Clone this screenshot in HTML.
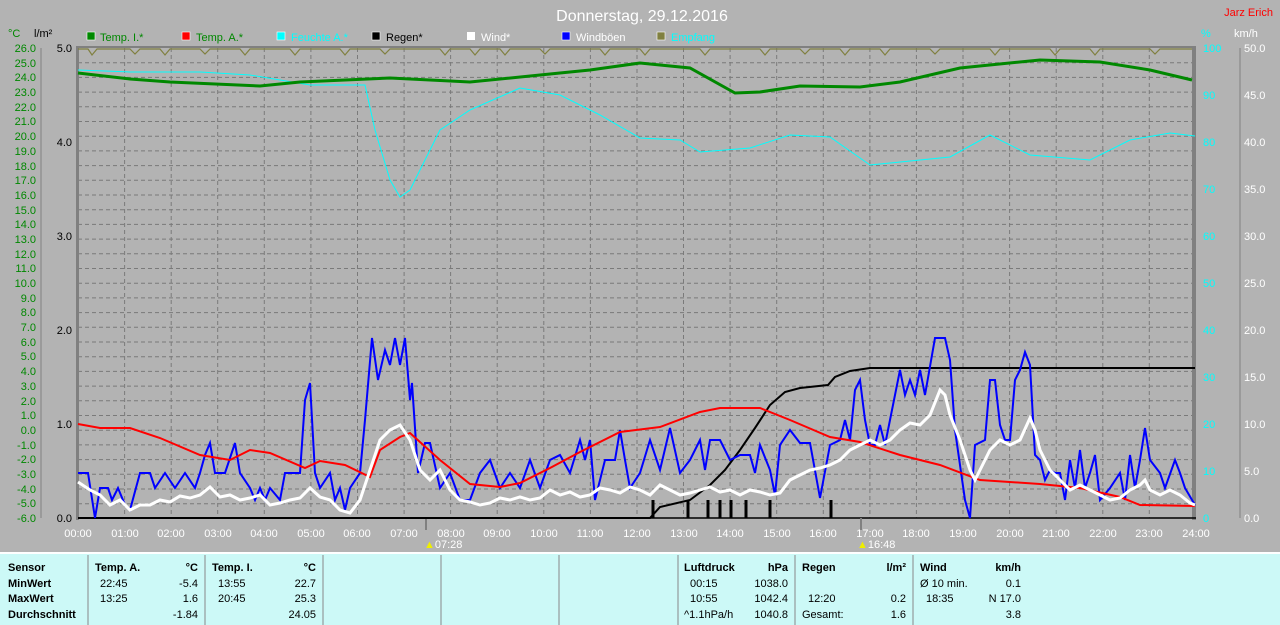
<!DOCTYPE html>
<html><head><meta charset="utf-8"><style>
html,body{margin:0;padding:0;background:#b3b3b3;width:1280px;height:625px;overflow:hidden;font-family:"Liberation Sans",sans-serif}
svg{display:block}
</style></head><body>
<svg width="1280" height="625" xmlns="http://www.w3.org/2000/svg" font-family="Liberation Sans, sans-serif">
<rect width="1280" height="625" fill="#b3b3b3"/>
<text x="642" y="21" fill="#fff" font-size="16" text-anchor="middle">Donnerstag, 29.12.2016</text>
<text x="1273" y="16" fill="#f00" font-size="11" text-anchor="end">Jarz Erich</text>
<!-- legend -->
<g font-size="11">
<text x="8" y="37" fill="#080">°C</text><text x="34" y="37" fill="#000">l/m²</text>
<rect x="87" y="32" width="8" height="8" fill="#080" stroke="#fff" stroke-width=".6"/><text x="100" y="41" fill="#080">Temp. I.*</text>
<rect x="182" y="32" width="8" height="8" fill="#f00" stroke="#fff" stroke-width=".6"/><text x="196" y="41" fill="#080">Temp. A.*</text>
<rect x="277" y="32" width="8" height="8" fill="#0ff" stroke="#fff" stroke-width=".6"/><text x="291" y="41" fill="#0ff">Feuchte A.*</text>
<rect x="372" y="32" width="8" height="8" fill="#000" stroke="#fff" stroke-width=".6"/><text x="386" y="41" fill="#000">Regen*</text>
<rect x="467" y="32" width="8" height="8" fill="#fff"/><text x="481" y="41" fill="#fff">Wind*</text>
<rect x="562" y="32" width="8" height="8" fill="#00f" stroke="#fff" stroke-width=".6"/><text x="576" y="41" fill="#fff">Windböen</text>
<rect x="657" y="32" width="8" height="8" fill="#808040" stroke="#fff" stroke-width=".6"/><text x="671" y="41" fill="#0ff">Empfang</text>
<text x="1201" y="37" fill="#0ff">%</text><text x="1234" y="37" fill="#fff">km/h</text>
</g>
<!-- grid -->
<g stroke="#7a7a7a" stroke-dasharray="4,3" stroke-width="1">
<path d="M78 62.7H1192M78 77.4H1192M78 92.1H1192M78 106.8H1192M78 121.5H1192M78 136.2H1192M78 150.9H1192M78 165.6H1192M78 180.3H1192M78 195H1192M78 209.7H1192M78 224.4H1192M78 239.1H1192M78 253.8H1192M78 268.5H1192M78 283.2H1192M78 297.9H1192M78 312.6H1192M78 327.3H1192M78 342H1192M78 356.7H1192M78 371.4H1192M78 386.1H1192M78 400.8H1192M78 415.5H1192M78 430.2H1192M78 444.9H1192M78 459.6H1192M78 474.3H1192M78 489H1192M78 503.7H1192"/>
<path d="M124.6 48V518M171.2 48V518M217.7 48V518M264.3 48V518M310.9 48V518M357.5 48V518M404.1 48V518M450.6 48V518M497.2 48V518M543.8 48V518M590.4 48V518M637 48V518M683.5 48V518M730.1 48V518M776.7 48V518M823.3 48V518M869.9 48V518M916.4 48V518M963 48V518M1009.6 48V518M1056.2 48V518M1102.8 48V518M1149.3 48V518"/>
</g>
<rect x="76" y="46" width="3" height="474" fill="#808080"/>
<rect x="1192" y="46" width="4" height="474" fill="#808080"/>
<line x1="78" y1="47" x2="1196" y2="47" stroke="#808080" stroke-width="2"/>
<line x1="78" y1="518" x2="1196" y2="518" stroke="#000" stroke-width="1.5"/>
<!-- axes -->
<line x1="41" y1="48" x2="41" y2="518" stroke="#808080"/>
<line x1="1240" y1="48" x2="1240" y2="518" stroke="#808080"/>
<g font-size="11" fill="#080" text-anchor="end">
<text x="36" y="52">26.0</text><text x="36" y="67">25.0</text><text x="36" y="81">24.0</text><text x="36" y="96">23.0</text><text x="36" y="111">22.0</text><text x="36" y="125">21.0</text><text x="36" y="140">20.0</text><text x="36" y="155">19.0</text><text x="36" y="170">18.0</text><text x="36" y="184">17.0</text><text x="36" y="199">16.0</text><text x="36" y="214">15.0</text><text x="36" y="228">14.0</text><text x="36" y="243">13.0</text><text x="36" y="258">12.0</text><text x="36" y="272">11.0</text><text x="36" y="287">10.0</text><text x="36" y="302">9.0</text><text x="36" y="316">8.0</text><text x="36" y="331">7.0</text><text x="36" y="346">6.0</text><text x="36" y="360">5.0</text><text x="36" y="375">4.0</text><text x="36" y="390">3.0</text><text x="36" y="405">2.0</text><text x="36" y="419">1.0</text><text x="36" y="434">0.0</text><text x="36" y="449">-1.0</text><text x="36" y="463">-2.0</text><text x="36" y="478">-3.0</text><text x="36" y="493">-4.0</text><text x="36" y="507">-5.0</text><text x="36" y="522">-6.0</text>
</g>
<g font-size="11" fill="#000" text-anchor="end">
<text x="72" y="52">5.0</text><text x="72" y="146">4.0</text><text x="72" y="240">3.0</text><text x="72" y="334">2.0</text><text x="72" y="428">1.0</text><text x="72" y="522">0.0</text>
</g>
<g font-size="11" fill="#0ff">
<text x="1203" y="52">100</text><text x="1203" y="99">90</text><text x="1203" y="146">80</text><text x="1203" y="193">70</text><text x="1203" y="240">60</text><text x="1203" y="287">50</text><text x="1203" y="334">40</text><text x="1203" y="381">30</text><text x="1203" y="428">20</text><text x="1203" y="475">10</text><text x="1203" y="522">0</text>
</g>
<g font-size="11" fill="#fff">
<text x="1244" y="52">50.0</text><text x="1244" y="99">45.0</text><text x="1244" y="146">40.0</text><text x="1244" y="193">35.0</text><text x="1244" y="240">30.0</text><text x="1244" y="287">25.0</text><text x="1244" y="334">20.0</text><text x="1244" y="381">15.0</text><text x="1244" y="428">10.0</text><text x="1244" y="475">5.0</text><text x="1244" y="522">0.0</text>
</g>
<g font-size="11" fill="#fff" text-anchor="middle">
<text x="78" y="537">00:00</text><text x="125" y="537">01:00</text><text x="171" y="537">02:00</text><text x="218" y="537">03:00</text><text x="264" y="537">04:00</text><text x="311" y="537">05:00</text><text x="357" y="537">06:00</text><text x="404" y="537">07:00</text><text x="451" y="537">08:00</text><text x="497" y="537">09:00</text><text x="544" y="537">10:00</text><text x="590" y="537">11:00</text><text x="637" y="537">12:00</text><text x="684" y="537">13:00</text><text x="730" y="537">14:00</text><text x="777" y="537">15:00</text><text x="823" y="537">16:00</text><text x="870" y="537">17:00</text><text x="916" y="537">18:00</text><text x="963" y="537">19:00</text><text x="1010" y="537">20:00</text><text x="1056" y="537">21:00</text><text x="1103" y="537">22:00</text><text x="1149" y="537">23:00</text><text x="1196" y="537">24:00</text>
</g>
<line x1="426" y1="518" x2="426" y2="530" stroke="#808080" stroke-width="2"/>
<line x1="861" y1="518" x2="861" y2="530" stroke="#808080" stroke-width="2"/>
<text x="424" y="548" font-size="11" fill="#fff"><tspan fill="#ee0">▲</tspan>07:28</text>
<text x="857" y="548" font-size="11" fill="#fff"><tspan fill="#ee0">▲</tspan>16:48</text>
<!-- empfang -->
<polyline fill="none" stroke="#808040" stroke-width="1.2" points="78,49 88,49 92,55 97,49 130,49 135,54 140,49 160,49 165,55 170,49 200,49 205,54 210,49 240,49 245,55 250,49 290,49 295,55 300,49 340,49 345,55 350,49 380,49 385,54 390,49 440,49 445,55 450,49 470,49 475,55 480,49 500,49 505,55 510,49 540,49 545,54 550,49 600,49 605,55 610,49 640,49 645,55 650,49 700,49 705,55 710,49 760,49 765,55 770,49 800,49 805,54 810,49 840,49 845,55 850,49 880,49 885,55 890,49 930,49 935,54 940,49 990,49 995,55 1000,49 1050,49 1055,55 1060,49 1090,49 1095,55 1100,49 1150,49 1155,54 1160,49 1192,49"/>
<!-- humidity -->
<polyline fill="none" stroke="#0ff" stroke-width="1" points="78,70 130,72 200,72 250,75 310,85 365,85 375,130 390,180 400,197 410,190 440,130 470,110 520,88 560,95 600,115 640,138 680,140 700,152 750,148 790,135 830,137 870,165 920,160 950,157 990,135 1030,155 1090,160 1130,140 1170,133 1195,136"/>
<!-- temp I -->
<polyline fill="none" stroke="#080" stroke-width="3" points="78,73 130,79 170,82 260,86 300,82 390,78 470,82 540,75 590,70 640,63 690,68 735,93 760,92 800,86 860,87 900,82 960,68 1040,60 1100,62 1150,70 1192,80"/>
<!-- rain bars -->
<g stroke="#000" stroke-width="3"><path d="M653 518V500M688 518V500M708 518V500M720 518V500M731 518V500M746 518V500M770 518V500M831 518V500"/></g>
<!-- rain cumulative -->
<polyline fill="none" stroke="#000" stroke-width="2" points="78,518 650,518 660,507 690,500 710,485 725,470 740,450 755,428 770,405 785,392 800,388 828,385 835,377 850,371 870,368 1195,368"/>
<!-- blue gusts -->
<polyline fill="none" stroke="#00f" stroke-width="2" points="78,473 88,473 95,518 100,488 108,488 112,500 118,488 125,505 130,510 140,473 150,473 155,488 165,473 175,488 185,473 195,488 200,473 205,455 210,443 215,473 225,473 235,443 240,473 250,488 255,500 260,488 265,500 270,488 280,500 285,473 300,473 305,400 310,383 315,473 320,488 330,473 335,500 340,488 345,510 350,488 360,473 365,420 372,338 378,380 385,350 390,365 395,338 400,365 405,338 410,400 412,383 418,473 425,443 430,443 440,488 450,473 460,500 470,500 480,473 490,460 500,488 510,473 520,488 530,460 540,488 550,460 560,455 570,473 580,440 585,460 590,440 595,500 605,460 615,460 620,430 625,460 630,488 640,473 650,440 660,470 670,428 680,473 690,460 700,440 705,470 710,440 720,440 730,460 740,455 750,455 755,473 760,445 770,470 775,495 780,445 790,430 800,443 810,443 820,498 830,445 840,440 845,420 850,440 855,390 860,380 865,420 870,445 875,445 880,425 885,445 890,420 900,370 905,395 910,380 915,395 920,370 925,395 935,338 945,338 950,360 955,430 965,500 970,518 975,445 985,440 990,380 995,380 1000,425 1005,440 1010,440 1015,380 1020,370 1025,352 1030,365 1035,455 1040,460 1045,480 1050,470 1055,473 1060,473 1065,500 1070,460 1075,488 1080,450 1085,488 1090,473 1095,455 1100,500 1110,488 1120,473 1125,500 1130,455 1135,488 1140,460 1145,428 1150,460 1160,473 1165,488 1175,460 1180,473 1185,488 1195,505"/>
<!-- temp A -->
<polyline fill="none" stroke="#f00" stroke-width="2" points="78,424 100,428 130,428 160,438 200,455 230,460 250,450 270,453 305,468 320,461 345,465 370,477 380,450 400,437 410,433 440,460 470,484 500,487 520,483 550,468 580,452 620,432 660,427 700,412 720,408 760,408 790,420 830,437 860,442 900,455 940,465 980,480 1040,484 1080,488 1120,497 1140,505 1195,506"/>
<!-- wind -->
<polyline fill="none" stroke="#fff" stroke-width="3" points="78,482 90,490 100,495 110,505 120,500 130,510 140,505 150,505 160,500 170,502 180,496 190,498 200,495 210,487 220,497 230,495 240,500 250,498 260,495 270,505 280,503 290,500 300,498 310,488 320,497 330,500 340,510 350,513 360,500 370,470 380,440 390,430 400,425 410,440 420,470 430,480 440,470 450,490 460,500 470,502 480,505 490,503 500,498 510,500 520,497 530,500 540,498 550,490 560,495 570,492 580,497 590,495 600,488 610,490 620,493 630,487 640,490 650,495 660,485 670,490 680,495 690,493 700,490 710,487 720,492 730,490 740,495 750,490 760,492 770,495 780,493 790,480 800,475 810,470 820,468 830,465 840,460 850,450 860,445 870,440 880,445 890,440 900,430 910,423 920,425 930,415 940,390 945,395 950,415 960,440 970,470 975,480 980,470 990,450 1000,440 1010,445 1020,440 1030,418 1035,430 1040,450 1050,470 1060,480 1070,490 1080,485 1090,490 1100,495 1110,500 1120,498 1130,490 1140,485 1145,480 1150,490 1160,495 1170,490 1180,495 1190,503 1195,505"/>
<!-- table -->
<rect x="0" y="553" width="1280" height="72" fill="#ccf9f7"/>
<line x1="0" y1="553" x2="1280" y2="553" stroke="#fff" stroke-width="2"/>
<g stroke="#888" stroke-width="1"><path d="M88 555V625M205 555V625M323 555V625M441 555V625M559 555V625M678 555V625M795 555V625M913 555V625"/></g>
<g font-size="11" fill="#000">
<g font-weight="bold"><text x="8" y="571">Sensor</text><text x="8" y="587">MinWert</text><text x="8" y="602">MaxWert</text><text x="8" y="618">Durchschnitt</text>
<text x="95" y="571">Temp. A.</text><text x="198" y="571" text-anchor="end">°C</text>
<text x="212" y="571">Temp. I.</text><text x="316" y="571" text-anchor="end">°C</text>
<text x="684" y="571">Luftdruck</text><text x="788" y="571" text-anchor="end">hPa</text>
<text x="802" y="571">Regen</text><text x="906" y="571" text-anchor="end">l/m²</text>
<text x="920" y="571">Wind</text><text x="1021" y="571" text-anchor="end">km/h</text></g>
<text x="100" y="587">22:45</text><text x="198" y="587" text-anchor="end">-5.4</text>
<text x="100" y="602">13:25</text><text x="198" y="602" text-anchor="end">1.6</text>
<text x="198" y="618" text-anchor="end">-1.84</text>
<text x="218" y="587">13:55</text><text x="316" y="587" text-anchor="end">22.7</text>
<text x="218" y="602">20:45</text><text x="316" y="602" text-anchor="end">25.3</text>
<text x="316" y="618" text-anchor="end">24.05</text>
<text x="690" y="587">00:15</text><text x="788" y="587" text-anchor="end">1038.0</text>
<text x="690" y="602">10:55</text><text x="788" y="602" text-anchor="end">1042.4</text>
<text x="684" y="618">^1.1hPa/h</text><text x="788" y="618" text-anchor="end">1040.8</text>
<text x="808" y="602">12:20</text><text x="906" y="602" text-anchor="end">0.2</text>
<text x="802" y="618">Gesamt:</text><text x="906" y="618" text-anchor="end">1.6</text>
<text x="920" y="587">Ø 10 min.</text><text x="1021" y="587" text-anchor="end">0.1</text>
<text x="926" y="602">18:35</text><text x="1021" y="602" text-anchor="end">N 17.0</text>
<text x="1021" y="618" text-anchor="end">3.8</text>
</g>
</svg>
</body></html>
